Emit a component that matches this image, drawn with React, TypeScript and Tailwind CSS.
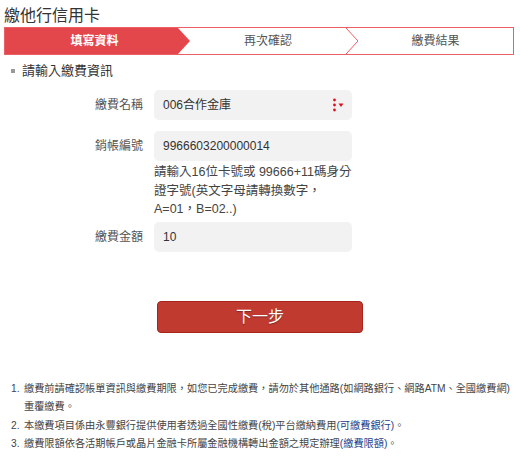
import React from "react";

const FONT = '"Liberation Sans", "Noto Sans CJK TC", sans-serif';

const STEPS_RED = "#e4474b";

function SelectMark() {
    return (
        <svg width="14" height="14" viewBox="0 0 14 14" className="shrink-0">
            <circle cx="2.5" cy="2" r="1.4" fill="#e0101e" />
            <circle cx="2.5" cy="7" r="1.4" fill="#e0101e" />
            <circle cx="2.5" cy="12" r="1.4" fill="#e0101e" />
            <path d="M6.5 5.5 L11.5 5.5 L9 9 Z" fill="#e0101e" />
        </svg>
    );
}

function Field({ label, children }: { label: string; children: React.ReactNode }) {
    return (
        <div className="flex items-start">
            <div className="w-[143px] h-[30px] leading-[30px] text-right text-[12px] text-[#555]">{label}</div>
            <div className="ml-[11px] w-[198px]">{children}</div>
        </div>
    );
}

function Box({ value, select = false }: { value: string; select?: boolean }) {
    return (
        <div className="flex items-center justify-between h-[30px] rounded-[5px] bg-[#f2f2f2] pl-[9px] pr-[6px] text-[12px] text-[#333]">
            <span>{value}</span>
            {select && <SelectMark />}
        </div>
    );
}

export default function App() {
    return (
        <div className="w-[520px] h-[456px] bg-white overflow-hidden text-[#333]" style={{ fontFamily: FONT }}>
            {/* ── 標題 ── */}
            <div className="h-[27px] pl-[4px] pt-[4px] leading-[23px] text-[16px] text-[#333]">繳他行信用卡</div>

            {/* ── 步驟列 ── */}
            <div className="mx-[4px] w-[510px] h-[28px] flex border border-[#ea6064] text-[12px]">
                <div
                    className="w-[185px] h-full flex items-center justify-center pr-[6px] text-white font-bold text-[12px] [clip-path:polygon(0_0,173px_0,185px_50%,173px_100%,0_100%)]"
                    style={{ backgroundColor: STEPS_RED }}
                >
                    填寫資料
                </div>
                <div className="w-[156px] h-full flex items-center justify-center text-[#555]">再次確認</div>
                <svg width="12" height="26" viewBox="0 0 12 26" className="shrink-0">
                    <path d="M0 0 L12 13 L0 26" fill="none" stroke="#ea6064" strokeWidth="1" />
                </svg>
                <div className="flex-1 h-full flex items-center justify-center text-[#555]">繳費結果</div>
            </div>

            {/* ── 小標 ── */}
            <div className="h-[32px] flex items-center pl-[11px] text-[13px] text-[#333]">
                <span className="w-[4px] h-[4px] bg-[#999] mr-[7px]" />
                請輸入繳費資訊
            </div>

            {/* ── 表單 ── */}
            <div className="mt-[3px] flex flex-col">
                <Field label="繳費名稱">
                    <Box value="006合作金庫" select />
                </Field>
                <div className="mt-[11px]">
                    <Field label="銷帳編號">
                        <Box value="9966603200000014" />
                        <div className="mt-[2px] text-[12.5px] leading-[18.5px] text-[#444] whitespace-nowrap">
                            請輸入16位卡號或 99666+11碼身分
                            <br />
                            證字號(英文字母請轉換數字，
                            <br />
                            A=01，B=02..)
                        </div>
                    </Field>
                </div>
                <div className="mt-[3px]">
                    <Field label="繳費金額">
                        <Box value="10" />
                    </Field>
                </div>
            </div>

            {/* ── 下一步 ── */}
            <div className="mt-[49px] pl-[157px]">
                <button
                    type="button"
                    className="w-[206px] h-[32px] rounded-[4px] border border-[#a5231a] bg-[#c03a30] text-white text-[16px] [text-shadow:0_1px_1px_rgba(0,0,0,0.35)]"
                >
                    下一步
                </button>
            </div>

            {/* ── 注意事項 ── */}
            <ol className="mt-[47px] pl-[11px] text-[10.2px] leading-[18px] text-[#444] whitespace-nowrap">
                <li className="flex">
                    <span className="w-[13px] shrink-0">1.</span>
                    <span>
                        繳費前請確認帳單資訊與繳費期限，如您已完成繳費，請勿於其他通路(如網路銀行、網路ATM、全國繳費網)
                        <br />
                        重覆繳費。
                    </span>
                </li>
                <li className="flex mt-[1px]">
                    <span className="w-[13px] shrink-0">2.</span>
                    <span>
                        本繳費項目係由永豐銀行提供使用者透過全國性繳費(稅)平台繳納費用
                        <span className="text-[#1d3f8a]">(可繳費銀行)</span>。
                    </span>
                </li>
                <li className="flex">
                    <span className="w-[13px] shrink-0">3.</span>
                    <span>
                        繳費限額依各活期帳戶或晶片金融卡所屬金融機構轉出金額之規定辦理
                        <span className="text-[#1d3f8a]">(繳費限額)</span>。
                    </span>
                </li>
            </ol>
        </div>
    );
}
